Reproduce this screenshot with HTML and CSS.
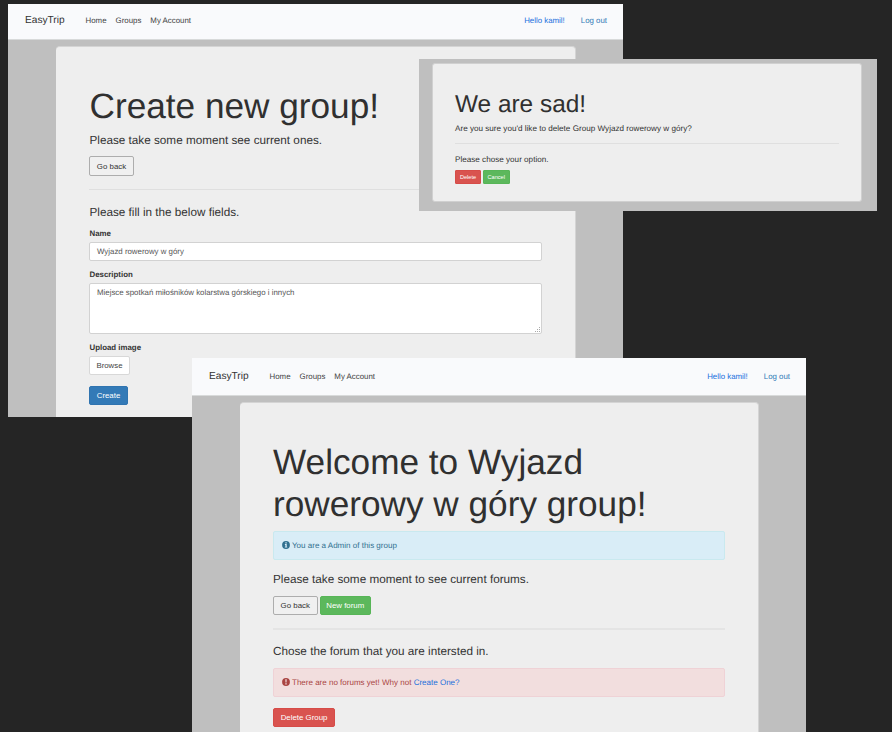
FILE: index.html
```html
<!DOCTYPE html>
<html lang="en">
<head>
<meta charset="utf-8">
<title>EasyTrip</title>
<link rel="stylesheet" href="styles.css">
</head>
<body>
<main class="desktop">
  <section class="window window-create">
    <nav class="navbar">
      <a class="brand">EasyTrip</a>
      <a>Home</a><a>Groups</a><a>My Account</a>
      <div class="nav-right"><a class="hello">Hello kamil!</a><a class="logout">Log out</a></div>
    </nav>
    <div class="panel">
      <h1>Create new group!</h1>
      <h2 class="lead">Please take some moment see current ones.</h2>
      <div class="buttons"><button class="btn outline back">Go back</button></div>
      <hr>
      <h2>Please fill in the below fields.</h2>
      <form>
        <label>Name</label>
        <div class="field">Wyjazd rowerowy w góry</div>
        <label>Description</label>
        <div class="field area">Miejsce spotkań miłośników kolarstwa górskiego i innych
          <svg class="grip" viewBox="0 0 6 6"><path d="M4 0h1v1H4zM2 2h1v1H2zM4 2h1v1H4zM0 4h1v1H0zM2 4h1v1H2zM4 4h1v1H4z"/></svg>
        </div>
        <label>Upload image</label>
        <button type="button" class="btn browse">Browse</button>
        <button type="button" class="btn primary create">Create</button>
      </form>
    </div>
  </section>

  <section class="window window-delete">
    <div class="panel">
      <h1>We are sad!</h1>
      <p>Are you sure you'd like to delete Group Wyjazd rowerowy w góry?</p>
      <hr>
      <p>Please chose your option.</p>
      <div class="buttons"><button class="btn danger">Delete</button><button class="btn success">Cancel</button></div>
    </div>
  </section>

  <section class="window window-group">
    <nav class="navbar">
      <a class="brand">EasyTrip</a>
      <a>Home</a><a>Groups</a><a>My Account</a>
      <div class="nav-right"><a class="hello">Hello kamil!</a><a class="logout">Log out</a></div>
    </nav>
    <div class="panel">
      <h1>Welcome to Wyjazd rowerowy w góry group!</h1>
      <div class="alert info">
        <svg viewBox="0 0 8 8"><circle cx="4" cy="4" r="3.9" fill="#31708f"/><path d="M3.4 1.3h1.3v1.1H3.4zM2.9 3.1h1.8v2.7h.5v.8H2.8v-.8h.6V3.9h-.5z" fill="#d9edf7"/></svg>
        <span>You are a Admin of this group</span>
      </div>
      <h2 class="forums">Please take some moment to see current forums.</h2>
      <div class="buttons"><button class="btn outline back">Go back</button><button class="btn success forum">New forum</button></div>
      <hr>
      <h2>Chose the forum that you are intersted in.</h2>
      <div class="alert warn">
        <svg viewBox="0 0 8 8"><circle cx="4" cy="4" r="3.9" fill="#a94442"/><path d="M3.3 1.2h1.4l-.2 3.2h-1zM3.3 5.2h1.4v1.3H3.3z" fill="#f2dede"/></svg>
        <span>There are no forums yet! Why not <a>Create One?</a></span>
      </div>
      <button class="btn danger remove">Delete Group</button>
    </div>
  </section>
</main>
</body>
</html>
```
FILE: styles.css
```css
* { box-sizing: border-box; }
body {
  margin: 0;
  background: #252525;
  color: #333;
  font: 7.87px/11px "Liberation Sans", Arial, sans-serif;
  text-rendering: geometricPrecision;
}
h1, h2, p { margin: 0; font-weight: 400; }
h1 { font-size: 35.2px; line-height: 42px; color: #303030; }
h2 { font-size: 11.72px; line-height: 17px; }
hr { width: 100%; height: 1px; margin: 0; border: 0; background: #dfdfdf; }

.desktop { position: relative; width: 892px; height: 732px; overflow: hidden; }
.window { position: absolute; overflow: hidden; background: #bfbfbf; }
.window-create { left: 8px; top: 4px; width: 615px; height: 413px; }
.window-delete { left: 419px; top: 59px; width: 458px; height: 152px; padding: 4px 15px 9px 13px; }
.window-group { left: 192px; top: 358px; width: 614px; height: 374px; }

.navbar {
  display: flex;
  align-items: center;
  gap: 9px;
  height: 36px;
  padding: 0 16px 2px 17px;
  background: #f9fafc;
  border-bottom: 1px solid #d8dada;
  color: #444;
}
.window-group .navbar { height: 38px; padding-bottom: 0; }
.brand { margin-right: 12px; font-size: 10.15px; color: #333; }
.nav-right { display: flex; gap: 16px; margin-left: auto; }
.hello { color: #1a6fdc; }
.logout { color: #337ab7; }

.panel {
  width: 520px;
  height: 420px;
  margin: 6px 0 0 48px;
  padding: 39px 34px 0 33px;
  background: #eee;
  border: solid #d4d4d4;
  border-width: 1px 1px 0 0;
  border-radius: 4px;
}
.window-create .panel { padding-top: 39px; padding-right: 33px; padding-left: 33px; }
.window-create h1, .window-create h2 { padding-left: .5px; }
.window-group .panel { width: 519px; padding-top: 39px; padding-right: 33px; }

.lead { margin-top: 4px; }
.buttons { display: flex; gap: 2px; margin-top: 7px; }
.btn {
  display: flex;
  align-items: center;
  justify-content: center;
  height: 19px;
  padding: 0;
  border: 1px solid transparent;
  border-radius: 2px;
  color: #fff;
  font: inherit;
}
.outline { background: #f0f0f0; border-color: #adadad; color: #333; }
.back { width: 45px; }
.primary { background: #337ab7; border-color: #3074b0; }
.success { background: #5cb85c; border-color: #57b557; }
.danger { background: #d9534f; border-color: #d64c48; }

.window-create .lead + .buttons .btn { height: 20px; }
.window-create hr { margin: 13px 0 14px; }
form { padding-top: 7px; }
label { display: block; padding-left: .5px; font-weight: 700; }
.field {
  position: relative;
  height: 19px;
  margin: 3px 0 8px;
  padding: 3px 7px;
  background: #fff;
  border: 1px solid #d2d2d2;
  border-radius: 2px;
  color: #555;
}
.area { height: 51px; }
.grip { position: absolute; right: 0; bottom: 0; width: 6px; height: 6px; fill: #aaa; }
.browse { width: 41px; margin-top: 3px; background: #fff; border-color: #d8d8d8; color: #444; }
.create { width: 39px; margin-top: 11px; }

.window-delete .panel {
  width: 430px;
  height: 139px;
  margin: 0;
  padding: 27px 22px 0 22px;
  border-width: 1px;
  border-color: #d0d0d0;
  border-radius: 3px;
  font-size: 8.13px;
}
.window-delete h1 { margin-bottom: 4px; font-size: 24.4px; line-height: 28px; }
.window-delete hr { margin: 9px 0 10px; }
.window-delete .buttons { margin-top: 5px; gap: 1.5px; }
.window-delete .btn { width: 26px; height: 14px; border-radius: 1px; font-size: 5.6px; }
.window-delete .success { width: 27.5px; }

.alert {
  display: flex;
  align-items: center;
  gap: 2px;
  height: 29px;
  padding: 0 8px;
  border: 1px solid;
  border-radius: 2px;
  font-size: 8.03px;
}
.alert svg { width: 8px; height: 8px; margin-bottom: 1px; }
.info { margin-top: 5px; background: #d9edf7; border-color: #c9e9ef; color: #31708f; }
.warn { margin-top: 8px; background: #f2dede; border-color: #efd2d6; color: #a94442; }
.warn a { color: #1a6fdc; }
.forums { margin-top: 11px; }
.window-group .buttons { margin-top: 8px; }
.window-group .back { width: 44.5px; }
.forum { width: 51.5px; }
.window-group hr { height: 2px; margin: 13px 0; background: #e4e4e4; }
.remove { width: 62px; margin-top: 11px; }
```
